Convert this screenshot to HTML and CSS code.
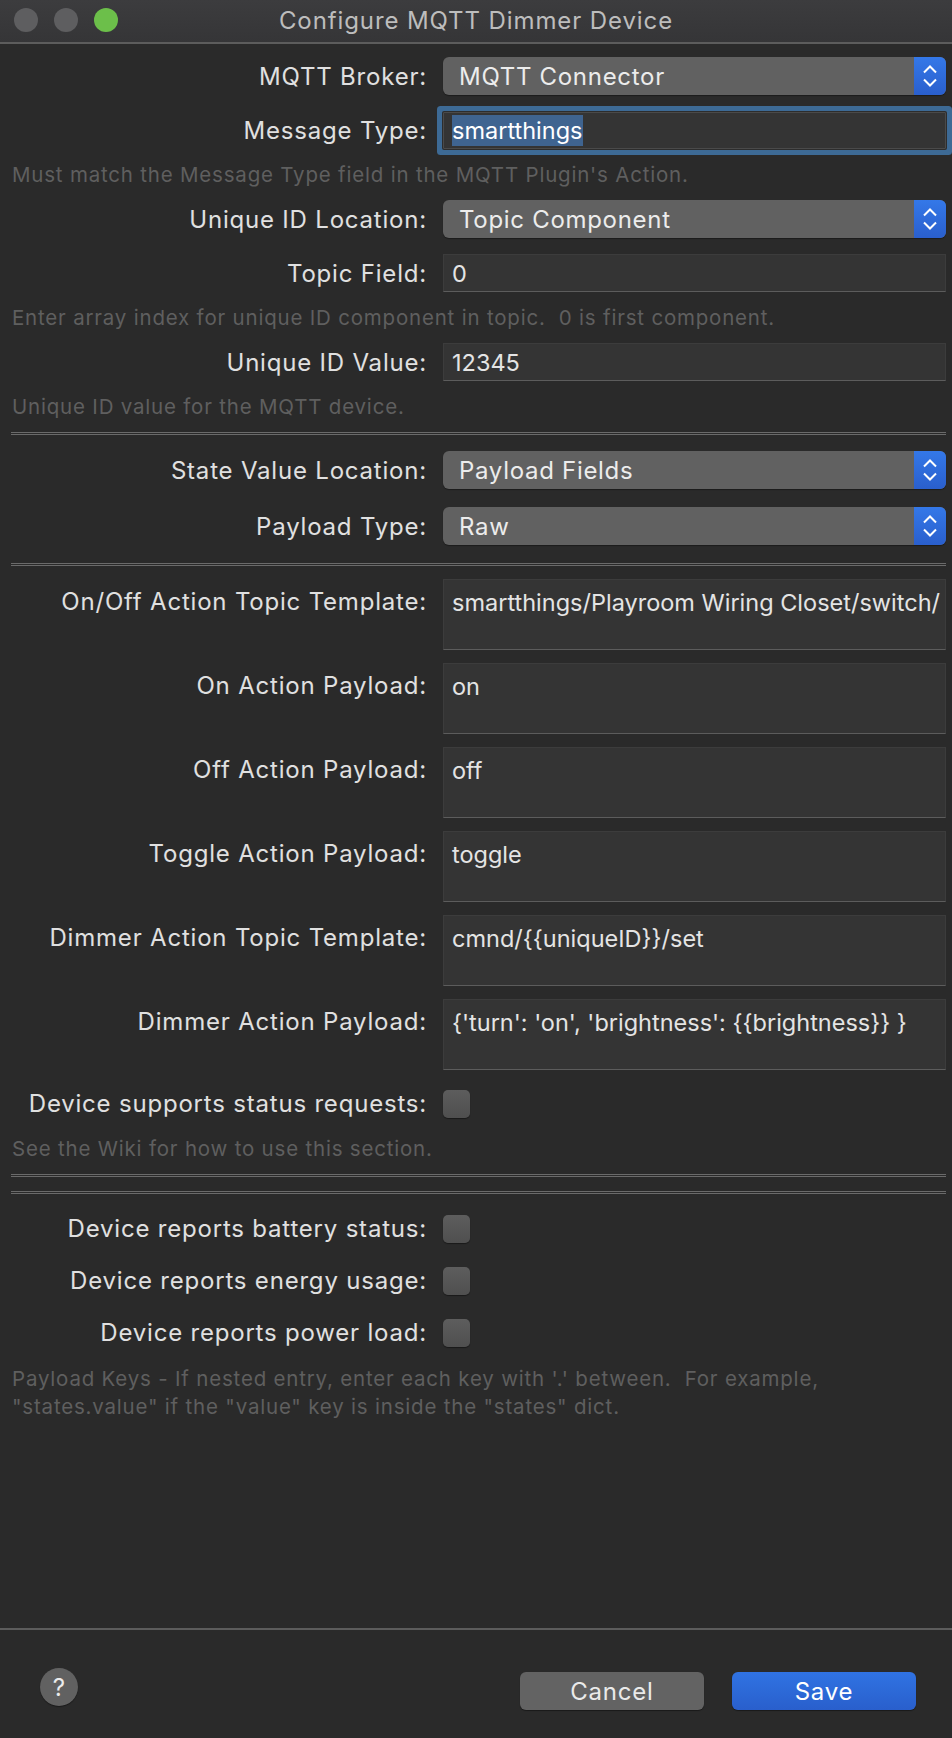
FILE: index.html
```html
<!DOCTYPE html>
<html lang="en">
<head>
    <meta charset="UTF-8">
    <title>Configure MQTT Dimmer Device</title>
    <link rel="stylesheet" href="styles.css">
</head>
<body>
    <div class="window">
        <header class="titlebar">
            <div class="lights">
                <span class="light"></span>
                <span class="light"></span>
                <span class="light zoom"></span>
            </div>
            <h1>Configure MQTT Dimmer Device</h1>
        </header>

        <main class="form">
            <div class="row first">
                <label>MQTT Broker:</label>
                <div class="popup">MQTT Connector<span class="stepper"><svg viewBox="0 0 14 22" width="14" height="22"><path d="M1 7.5 7 1.5l6 6M1 14.5l6 6 6-6"/></svg></span></div>
            </div>
            <div class="row">
                <label>Message Type:</label>
                <div class="field focused"><span class="selected">smartthings</span></div>
            </div>
            <p class="help">Must match the Message Type field in the MQTT Plugin's Action.</p>
            <div class="row after-help">
                <label>Unique ID Location:</label>
                <div class="popup">Topic Component<span class="stepper"><svg viewBox="0 0 14 22" width="14" height="22"><path d="M1 7.5 7 1.5l6 6M1 14.5l6 6 6-6"/></svg></span></div>
            </div>
            <div class="row">
                <label>Topic Field:</label>
                <div class="field">0</div>
            </div>
            <p class="help">Enter array index for unique ID component in topic.&nbsp; 0 is first component.</p>
            <div class="row after-help">
                <label>Unique ID Value:</label>
                <div class="field">12345</div>
            </div>
            <p class="help">Unique ID value for the MQTT device.</p>

            <hr class="sep">

            <div class="row roomy">
                <label>State Value Location:</label>
                <div class="popup">Payload Fields<span class="stepper"><svg viewBox="0 0 14 22" width="14" height="22"><path d="M1 7.5 7 1.5l6 6M1 14.5l6 6 6-6"/></svg></span></div>
            </div>
            <div class="row roomy">
                <label>Payload Type:</label>
                <div class="popup">Raw<span class="stepper"><svg viewBox="0 0 14 22" width="14" height="22"><path d="M1 7.5 7 1.5l6 6M1 14.5l6 6 6-6"/></svg></span></div>
            </div>

            <hr class="sep roomy">

            <div class="row top">
                <label>On/Off Action Topic Template:</label>
                <div class="field area">smartthings/Playroom Wiring Closet/switch/</div>
            </div>
            <div class="row top">
                <label>On Action Payload:</label>
                <div class="field area">on</div>
            </div>
            <div class="row top">
                <label>Off Action Payload:</label>
                <div class="field area">off</div>
            </div>
            <div class="row top">
                <label>Toggle Action Payload:</label>
                <div class="field area">toggle</div>
            </div>
            <div class="row top">
                <label>Dimmer Action Topic Template:</label>
                <div class="field area">cmnd/{{uniqueID}}/set</div>
            </div>
            <div class="row top">
                <label>Dimmer Action Payload:</label>
                <div class="field area">{'turn': 'on', 'brightness': {{brightness}} }</div>
            </div>
            <div class="row check-row">
                <label>Device supports status requests:</label>
                <span class="checkbox"></span>
            </div>
            <p class="help wide">See the Wiki for how to use this section.</p>

            <hr class="sep">
            <hr class="sep">

            <div class="row check-row first-check">
                <label>Device reports battery status:</label>
                <span class="checkbox"></span>
            </div>
            <div class="row check-row">
                <label>Device reports energy usage:</label>
                <span class="checkbox"></span>
            </div>
            <div class="row check-row">
                <label>Device reports power load:</label>
                <span class="checkbox"></span>
            </div>
            <p class="help wide multi">Payload Keys - If nested entry, enter each key with '.' between.&nbsp; For example,<br>"states.value" if the "value" key is inside the "states" dict.</p>
        </main>

        <footer class="footer">
            <button class="help-btn" type="button">?</button>
            <div class="actions">
                <button class="btn" type="button">Cancel</button>
                <button class="btn primary" type="button">Save</button>
            </div>
        </footer>
    </div>
</body>
</html>
```

FILE: styles.css
```css
* {
    box-sizing: border-box;
}

body {
    margin: 0;
    background: #2a2a2a;
    font-family: Inter, "Noto Sans", sans-serif;
    color: #dedede;
}

.window {
    display: flex;
    flex-direction: column;
    min-height: 1738px;
    width: 952px;
}

/* title bar */
.titlebar {
    position: relative;
    height: 44px;
    display: flex;
    align-items: center;
    justify-content: center;
    background: linear-gradient(#3c3c3e, #353537);
    border-bottom: 2px solid #5c5c5c;
}

.lights {
    position: absolute;
    left: 14px; top: 8px;
    display: flex;
    gap: 16px;
}

.light {
    width: 24px; height: 24px;
    border-radius: 50%;
    background: #5e5e60;
}

.light.zoom {
    background: #6cbf4a;
}

.titlebar h1 {
    margin: 0 0 2px;
    font-size: 24px;
    font-weight: 400;
    letter-spacing: .9px;
    color: #bdbdbd;
}

/* form body */
.form {
    flex: 1;
    padding: 0 6px 0 11px;
}

.row {
    display: grid;
    grid-template-columns: 416px 503px;
    column-gap: 16px;
    align-items: center;
    margin-top: 16px;
}

.row.first {
    margin-top: 13px;
}

.row.after-help {
    margin-top: 12px;
}

.row.roomy {
    margin-top: 18px;
}

.sep + .row.roomy {
    margin-top: 16px;
}

.row label {
    text-align: right;
    font-size: 24px;
    letter-spacing: .8px;
    color: #e0e0e0;
}

.row.top {
    align-items: start;
    margin-top: 13px;
}

.row.top label {
    padding-top: 8px;
}

.popup {
    position: relative;
    height: 38px;
    padding-left: 16px;
    display: flex;
    align-items: center;
    border-radius: 6px;
    background: #616161;
    box-shadow: 0 1px 1px rgba(0, 0, 0, .35);
    font-size: 24px;
    letter-spacing: .7px;
    color: #ececec;
}

.stepper {
    position: absolute;
    right: 0; top: 0; bottom: 0;
    width: 32px;
    display: flex;
    align-items: center;
    justify-content: center;
    border-radius: 0 6px 6px 0;
    background: linear-gradient(#3478e8, #2a5fcd);
}

.stepper path {
    fill: none;
    stroke: #fff;
    stroke-width: 2;
}

.field {
    height: 38px;
    padding: 0 8px;
    display: flex;
    align-items: center;
    background: #343434;
    border: 1px solid #3c3c3c;
    border-bottom-color: #5c5c5c;
    font-size: 23.5px;
    color: #e4e4e4;
    white-space: nowrap;
    overflow: hidden;
}

.field.area {
    height: 71px;
    align-items: flex-start;
    padding-top: 8px;
}

.field.focused {
    height: 37px;
    margin-top: 1px;
    border-color: #4a4a4a;
    border-radius: 1px;
    box-shadow: 0 0 0 1px #2d2d2d, 0 0 0 6px #3d6a95;
}

.selected {
    padding: 1px 0;
    background: #3f6490;
    color: #fff;
}

.help {
    margin: 13px 0 0 1px;
    font-size: 20.5px;
    line-height: 26px;
    letter-spacing: .8px;
    color: #5f5f5f;
}

.help.wide {
    margin-top: 18px;
}

.help.multi {
    line-height: 28px;
}

.sep {
    height: 3px;
    margin: 12px 0 0;
    border: 0;
    border-top: 1px solid #6a6a6a;
    border-bottom: 1px solid #6a6a6a;
}

.help.wide + .sep {
    margin-top: 12px;
}

.sep + .sep {
    margin-top: 14px;
}

.sep.roomy {
    margin-top: 18px;
}

.check-row {
    margin-top: 23px;
}

.row.top + .check-row {
    margin-top: 19px;
}

.check-row.first-check {
    margin-top: 20px;
}

.checkbox {
    width: 27px; height: 28px;
    border-radius: 5px;
    background: linear-gradient(#5d5d5d, #4f4f4f);
    box-shadow: 0 1px 1px rgba(0, 0, 0, .4);
}

/* bottom buttons */
.footer {
    height: 110px;
    display: flex;
    align-items: flex-start;
    justify-content: space-between;
    padding: 42px 36px 0 40px;
    border-top: 2px solid #5c5c5c;
}

.help-btn {
    width: 38px; height: 38px;
    margin-top: -4px;
    border: none;
    border-radius: 50%;
    background: #616161;
    box-shadow: 0 1px 1px rgba(0, 0, 0, .4);
    font-family: Inter, sans-serif;
    font-size: 24px;
    color: #ececec;
}

.actions {
    display: flex;
    gap: 28px;
}

.btn {
    width: 184px; height: 38px;
    border: none;
    border-radius: 6px;
    background: #636363;
    box-shadow: 0 1px 1px rgba(0, 0, 0, .4);
    font-family: Inter, sans-serif;
    font-size: 24px;
    letter-spacing: .8px;
    color: #eaeaea;
}

.btn.primary {
    background: linear-gradient(#3073e3, #295fcc);
    color: #fff;
}
```
